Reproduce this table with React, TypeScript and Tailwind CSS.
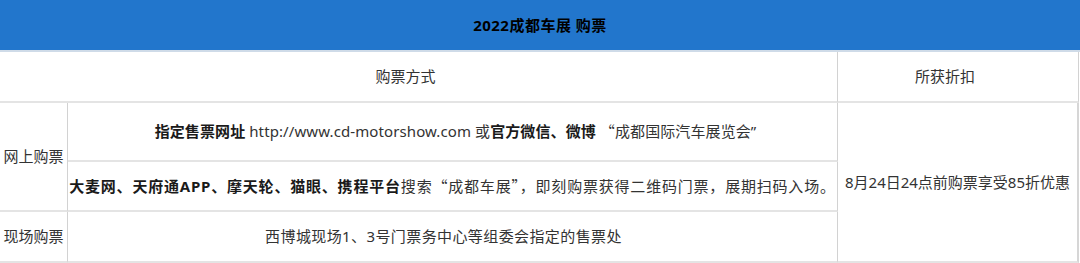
const font = { fontFamily: '"Noto Sans", "Noto Sans CJK SC", sans-serif' };
const cjk = { fontFamily: '"Noto Sans CJK SC", sans-serif' };

export default function App() {
  const cell = "flex items-center justify-center border-b-2 border-b-[#e4e4e4] border-r border-r-[#d2d2d2] text-[15px] text-[#333] whitespace-nowrap";

  return (
    <div className="w-[1080px] h-[263px] bg-white overflow-hidden" style={font}>
      <div className="h-[52px] bg-[#2276cc] border-b-2 border-[#cfdbe8] flex items-center justify-center">
        <span className="text-[15px] font-bold text-black tracking-[0.5px]">2022成都车展 购票</span>
      </div>

      <div className="grid grid-cols-[68px_770px_241px] grid-rows-[51px_59px_50px_51px]">
        <div className={`${cell} col-span-2 pr-[26px]`}>购票方式</div>
        <div className={`${cell} pr-[26px]`}>所获折扣</div>

        <div className={`${cell} row-span-2`}>网上购票</div>
        <div className={`${cell} tracking-[0.1px] pl-[6px]`}>
          <b className="text-[#1a1a1a]">指定售票网址</b>
          <span>&nbsp;http://www.cd-motorshow.com 或</span>
          <b className="text-[#1a1a1a]">官方微信、微博</b>
          <span>&nbsp;<span style={cjk}>“</span>成都国际汽车展览会”</span>
        </div>
        <div className={`${cell} row-span-3 border-r-2 border-r-[#d6d6d6]`}>8月24日24点前购票享受85折优惠</div>

        <div className={`${cell} tracking-[0.8px]`}>
          <b className="text-[#1a1a1a]">大麦网、天府通APP、摩天轮、猫眼、携程平台</b>
          <span>搜索<span style={cjk}>“</span>成都车展<span style={cjk}>”</span>，即刻购票获得二维码门票，展期扫码入场。</span>
        </div>

        <div className={cell}>现场购票</div>
        <div className={`${cell} tracking-[0.4px] pr-[18px]`}>西博城现场1、3号门票务中心等组委会指定的售票处</div>
      </div>
    </div>
  );
}
